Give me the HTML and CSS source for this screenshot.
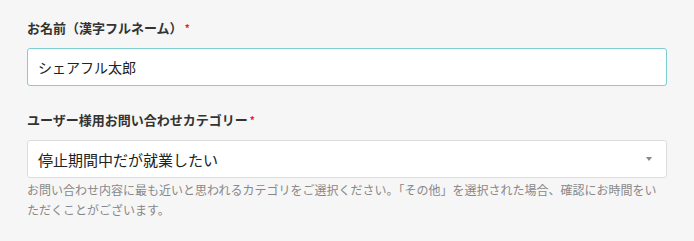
FILE: index.html
```html
<!DOCTYPE html>
<html lang="ja">
<head>
<meta charset="utf-8">
<link rel="stylesheet" href="styles.css">
</head>
<body>
<form class="form">
  <div class="field field-name">
    <label class="label">お名前（漢字フルネーム）<span class="req">*</span></label>
    <div class="input input-focus">シェアフル太郎</div>
  </div>
  <div class="field">
    <label class="label">ユーザー様用お問い合わせカテゴリー<span class="req">*</span></label>
    <div class="input select">
      <span class="select-value">停止期間中だが就業したい</span>
      <span class="arrow"></span>
    </div>
    <p class="help">お問い合わせ内容に最も近いと思われるカテゴリをご選択ください。「その他」を選択された場合、確認にお時間をいただくことがございます。</p>
  </div>
</form>
</body>
</html>
```

FILE: styles.css
```css
html, body {
  margin: 0;
  padding: 0;
  background: #f6f6f6;
}
body {
  font-family: "Noto Sans CJK JP", "Noto Sans", sans-serif;
  color: #333;
}
.form {
  padding: 18px 27px 0 27px;
  width: 640px;
}
.field-name {
  margin-bottom: 24px;
}
.label {
  display: block;
  font-size: 13px;
  font-weight: bold;
  line-height: 20px;
  margin-bottom: 10px;
  color: #333;
}
.req {
  color: #e8202a;
  font-size: 10px;
  vertical-align: top;
  margin-left: 2px;
}
.input {
  box-sizing: border-box;
  height: 38px;
  background: #fff;
  border: 1px solid #ddd;
  border-radius: 3px;
  padding: 0 10px;
  display: flex;
  align-items: center;
  font-size: 14px;
  color: #222;
}
.input-focus {
  border-color: #7dcfd3;
}
.select {
  font-size: 15px;
  justify-content: space-between;
  padding-right: 14px;
}
.arrow {
  width: 0;
  height: 0;
  border-left: 3px solid transparent;
  border-right: 3px solid transparent;
  border-top: 4px solid #888;
}
.help {
  margin: 2px 0 0 0;
  font-size: 12px;
  line-height: 20px;
  color: #888;
}
```
